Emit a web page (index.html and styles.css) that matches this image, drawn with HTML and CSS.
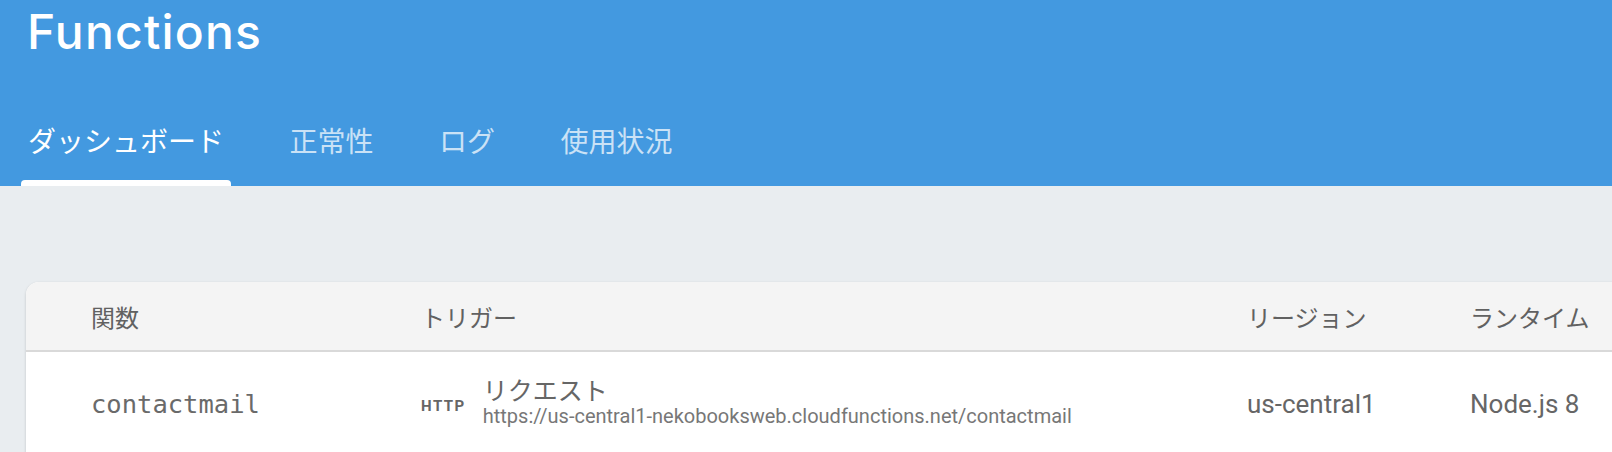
FILE: index.html
```html
<!DOCTYPE html>
<html lang="ja">
<head>
<meta charset="utf-8">
<title>Functions</title>
<link rel="stylesheet" href="styles.css">
</head>
<body>
<header class="appbar">
  <h1 class="title">Functions</h1>
  <nav class="tabs">
    <a class="tab tab-active">ダッシュボード</a>
    <a class="tab">正常性</a>
    <a class="tab">ログ</a>
    <a class="tab">使用状況</a>
  </nav>
</header>
<main class="content">
  <section class="card">
    <div class="row row-head">
      <div class="cell">関数</div>
      <div class="cell">トリガー</div>
      <div class="cell">リージョン</div>
      <div class="cell">ランタイム</div>
    </div>
    <div class="row row-body">
      <div class="cell fn-name">contactmail</div>
      <div class="cell trigger">
        <span class="badge">HTTP</span>
        <div class="trigger-text">
          <div class="trigger-type">リクエスト</div>
          <div class="trigger-url">https://us-central1-nekobooksweb.cloudfunctions.net/contactmail</div>
        </div>
      </div>
      <div class="cell">us-central1</div>
      <div class="cell">Node.js 8</div>
    </div>
  </section>
</main>
</body>
</html>
```

FILE: styles.css
```css
html, body {
  margin: 0;
  padding: 0;
  overflow: hidden;
}
body {
  background: #e9edf0;
  font-family: Roboto, "Noto Sans CJK JP", sans-serif;
  width: 1612px;
  height: 452px;
}
.appbar {
  background: #4399e0;
  height: 186px;
  display: flex;
  flex-direction: column;
  color: #fff;
}
.title {
  margin: 0;
  padding-left: 27px;
  height: 120px;
  font-family: Inter, sans-serif;
  font-weight: 500;
  font-size: 48px;
  line-height: 64px;
  letter-spacing: 1.2px;
}
.tabs {
  display: flex;
  gap: 51.5px;
  padding-left: 21px;
}
.tab {
  position: relative;
  padding: 0 7px 26px;
  font-family: "Noto Sans CJK JP", sans-serif;
  font-size: 28px;
  line-height: 40px;
  color: rgba(255, 255, 255, 0.72);
}
.tab-active {
  color: #fff;
}
.tab-active::after {
  content: "";
  position: absolute;
  left: 0;
  right: 0;
  bottom: 0;
  height: 6px;
  background: #fff;
  border-radius: 4px 4px 0 0;
}
.content {
  padding: 96px 0 0 26px;
}
.card {
  background: #fff;
  border-radius: 13px 0 0 0;
  margin-right: -40px;
  box-shadow: 0 1px 3px rgba(0, 0, 0, 0.18);
  overflow: hidden;
}
.row {
  display: grid;
  grid-template-columns: 330px 826px 223px 1fr;
  padding-left: 65px;
  align-items: center;
}
.row-head {
  height: 68px;
  background: #f4f4f4;
  border-bottom: 2px solid #d9d9d9;
  font-family: "Noto Sans CJK JP", sans-serif;
  font-size: 24px;
  color: #616161;
}
.row-body {
  height: 104px;
  font-size: 26px;
  color: #666;
}
.fn-name {
  font-family: "DejaVu Sans Mono", monospace;
  font-size: 25.5px;
  color: #6a6a6a;
}
.trigger {
  display: flex;
  align-items: center;
  gap: 17px;
}
.badge {
  font-family: Roboto, sans-serif;
  font-weight: 700;
  font-size: 15px;
  letter-spacing: 1.5px;
  color: #666;
  margin-top: 4px;
}
.trigger-text {
  margin-top: -8px;
}
.trigger-type {
  font-family: "Noto Sans CJK JP", sans-serif;
  font-size: 25px;
  line-height: 32px;
  color: #666;
}
.trigger-url {
  font-size: 20px;
  line-height: 22px;
  color: #777;
}
```
